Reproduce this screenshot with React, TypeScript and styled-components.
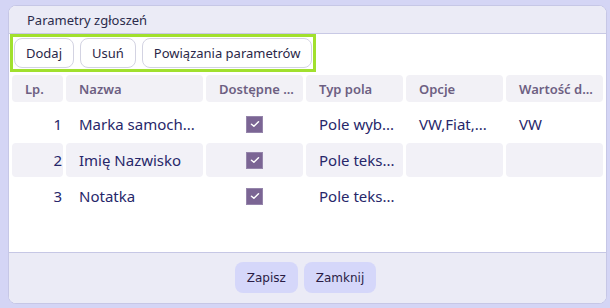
import styled, { createGlobalStyle } from 'styled-components';

const GlobalStyle = createGlobalStyle`
    html, body {
        margin: 0;
        padding: 0;
        background: #d4d5f5;
    }
    * {
        box-sizing: border-box;
    }
`;

const Page = styled.div`
    width: 610px;
    height: 308px;
    padding: 5px 3px 4px 8px;
    display: flex;
`;

const Dialog = styled.div`
    flex: 1;
    display: flex;
    flex-direction: column;
    border: 1px solid #c6c7e6;
    border-radius: 8px;
    overflow: hidden;
    background: #ffffff;
    font-family: 'Noto Sans', sans-serif;
`;

const TitleBar = styled.div`
    height: 28px;
    flex: none;
    display: flex;
    align-items: center;
    padding-left: 18px;
    background: #ebebf6;
    border-bottom: 1px solid #c8c9e5;
    color: #2c2b4c;
    font-size: 13px;
`;

const Body = styled.div`
    flex: 1;
    padding: 0 1px;
    display: flex;
    flex-direction: column;
    align-items: flex-start;
`;

const Toolbar = styled.div`
    display: flex;
    gap: 6px;
    padding: 1px;
    border: 3px solid #a1e02e;
`;

const ToolButton = styled.button`
    height: 30px;
    padding: 0 11px;
    border: 1px solid #d3d3e2;
    border-radius: 8px;
    background: #ffffff;
    color: #2a2748;
    font-family: inherit;
    font-size: 13px;
`;

const Grid = styled.div`
    display: grid;
    grid-template-columns: 51px 137px 97px 97px 97px 97px;
    column-gap: 3px;
    row-gap: 2px;
    margin: 3px 0 0 2px;
`;

const HeadCell = styled.div`
    height: 27px;
    display: flex;
    align-items: center;
    padding: 0 13px;
    margin-bottom: 3px;
    background: #f2f1f6;
    border-radius: 4px;
    color: #6d5f82;
    font-size: 13px;
    font-weight: 600;
    white-space: nowrap;
`;

const Cell = styled.div<{ $striped?: boolean; $align?: 'left' | 'right' | 'center' }>`
    height: 34px;
    display: flex;
    align-items: center;
    justify-content: ${({ $align }) =>
        $align === 'right' ? 'flex-end' : $align === 'center' ? 'center' : 'flex-start'};
    padding: 0 ${({ $align }) => ($align === 'right' ? '1px' : '13px')};
    background: ${({ $striped }) => ($striped ? '#f2f1f7' : 'transparent')};
    border-radius: 4px;
    color: #27276a;
    font-size: 15px;
    white-space: nowrap;
`;

const Check = styled.span`
    width: 17px;
    height: 17px;
    display: flex;
    align-items: center;
    justify-content: center;
    background: #7b6594;
    border: 1px solid #9585ab;
`;

const Footer = styled.div`
    height: 51px;
    flex: none;
    display: flex;
    justify-content: center;
    align-items: flex-start;
    gap: 6px;
    padding: 9px 4px 0 0;
    background: #ebebf6;
    border-top: 1px solid #c6c7e5;
`;

const FooterButton = styled.button`
    height: 31px;
    padding: 0 12px;
    border: none;
    border-radius: 8px;
    background: #d5d7fa;
    color: #2a1c45;
    font-family: 'DejaVu Sans', sans-serif;
    font-size: 12px;
`;

const columns = ['Lp.', 'Nazwa', 'Dostępne ...', 'Typ pola', 'Opcje', 'Wartość d...'];

const rows = [
    { lp: 1, name: 'Marka samoch...', type: 'Pole wyb...', options: 'VW,Fiat,...', value: 'VW' },
    { lp: 2, name: 'Imię Nazwisko', type: 'Pole teks...', options: '', value: '' },
    { lp: 3, name: 'Notatka', type: 'Pole teks...', options: '', value: '' },
];

function CheckMark() {
    return (
        <Check>
            <svg width="10" height="8" viewBox="0 0 10 8">
                <path d="M1.5 4.2 L3.9 6.3 L8.5 1.8" fill="none" stroke="#ffffff" strokeWidth="1.5" strokeLinecap="round" strokeLinejoin="round" />
            </svg>
        </Check>
    );
}

export default function App() {
    return (
        <>
            <GlobalStyle />
            <Page>
                <Dialog>
                    <TitleBar>Parametry zgłoszeń</TitleBar>
                    <Body>
                        <Toolbar>
                            <ToolButton>Dodaj</ToolButton>
                            <ToolButton>Usuń</ToolButton>
                            <ToolButton>Powiązania parametrów</ToolButton>
                        </Toolbar>
                        <Grid>
                            {columns.map((c) => (
                                <HeadCell key={c}>{c}</HeadCell>
                            ))}
                            {rows.map((r) => {
                                const striped = r.lp % 2 === 0;
                                return [
                                    <Cell key={`lp${r.lp}`} $striped={striped} $align="right">{r.lp}</Cell>,
                                    <Cell key={`n${r.lp}`} $striped={striped}>{r.name}</Cell>,
                                    <Cell key={`c${r.lp}`} $striped={striped} $align="center"><CheckMark /></Cell>,
                                    <Cell key={`t${r.lp}`} $striped={striped}>{r.type}</Cell>,
                                    <Cell key={`o${r.lp}`} $striped={striped}>{r.options}</Cell>,
                                    <Cell key={`v${r.lp}`} $striped={striped}>{r.value}</Cell>,
                                ];
                            })}
                        </Grid>
                    </Body>
                    <Footer>
                        <FooterButton>Zapisz</FooterButton>
                        <FooterButton>Zamknij</FooterButton>
                    </Footer>
                </Dialog>
            </Page>
        </>
    );
}
